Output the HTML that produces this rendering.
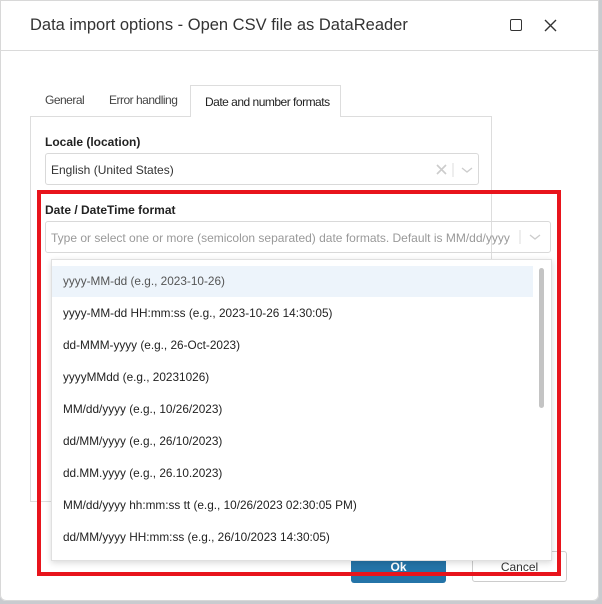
<!DOCTYPE html>
<html><head><style>
*{box-sizing:border-box;margin:0;padding:0}
body{width:602px;height:604px;background:#c9cbcf;font-family:"Liberation Sans",sans-serif;position:relative;overflow:hidden}
.dlg{position:absolute;left:0;top:0;width:599px;height:601px;background:#fff;border-radius:0 0 6px 6px;box-shadow:inset 0 0 0 1px #d8d8d8}
.a{position:absolute}
.title{left:30px;top:16px;font-size:16.5px;color:#333}
.sep{left:0;top:50px;width:599px;height:1px;background:#dadada}
.tab{font-size:12px;color:#444;letter-spacing:-0.5px}
.input{border:1px solid #d9d9d9;border-radius:3px;background:#fff}
.lbl{font-size:12px;color:#222;font-weight:bold}
.item{left:63px;font-size:11.8px;color:#222}
</style></head><body>
<div class="dlg">
<div class="a title">Data import options - Open CSV file as DataReader</div>
<div class="a" style="left:510px;top:19px;width:12px;height:12px;border:1.5px solid #333;border-radius:2px"></div>
<svg class="a" style="left:544px;top:19px" width="13" height="13"><path d="M1 1L12 12M12 1L1 12" stroke="#333" stroke-width="1.4"/></svg>
<div class="a sep"></div>
<div class="a" style="left:30px;top:116px;width:462px;height:386px;border:1px solid #ddd"></div>
<div class="a" style="left:190px;top:85px;width:151px;height:32px;border:1px solid #ddd;border-bottom:none;background:#fff"></div>
<div class="a tab" style="left:45px;top:93px">General</div>
<div class="a tab" style="left:109px;top:93px">Error handling</div>
<div class="a tab" style="left:205px;top:95px;color:#222">Date and number formats</div>
<div class="a lbl" style="left:45px;top:135px">Locale (location)</div>
<div class="a input" style="left:45px;top:153px;width:434px;height:32px"></div>
<div class="a" style="left:51px;top:163px;font-size:12px;color:#333">English (United States)</div>
<svg class="a" style="left:436px;top:163px" width="40" height="14"><path d="M1 2L10 11M10 2L1 11" stroke="#ccc" stroke-width="1.6"/><path d="M17 0V14" stroke="#ddd"/><path d="M26 5L31 9L36 5" stroke="#ccc" stroke-width="1.3" fill="none"/></svg>
<div class="a lbl" style="left:45px;top:203px">Date / DateTime format</div>
<div class="a" style="left:51px;top:231px;font-size:12px;color:#999;white-space:nowrap">Type or select one or more (semicolon separated) date formats. Default is MM/dd/yyyy</div>
<div class="a" style="left:45px;top:221px;width:506px;height:32px;border:1px solid #d9d9d9;border-radius:3px"></div>
<svg class="a" style="left:518px;top:230px" width="30" height="14"><path d="M2 0V14" stroke="#ddd"/><path d="M12 5L17 9L22 5" stroke="#ccc" stroke-width="1.3" fill="none"/></svg>
<div class="a" style="left:351px;top:551px;width:95px;height:32px;background:#2474a8;border-radius:3px;color:#fff;font-size:12px;font-weight:bold;text-align:center;line-height:32px">Ok</div>
<div class="a" style="left:472px;top:551px;width:95px;height:31px;border:1px solid #ccc;border-radius:3px;font-size:12px;color:#333;text-align:center;line-height:31px">Cancel</div>
<div class="a" style="left:51px;top:259px;width:501px;height:302px;background:#fff;border:1px solid #e0e0e0;box-shadow:0 2px 6px rgba(0,0,0,.15)"></div>
<div class="a" style="left:52px;top:266px;width:481px;height:31px;background:#edf4fb"></div>
<div class="a" style="left:539px;top:268px;width:5px;height:140px;background:#c4c4c4;border-radius:3px"></div>
<div class="a item" style="top:274px;color:#555">yyyy-MM-dd (e.g., 2023-10-26)</div>
<div class="a item" style="top:306px">yyyy-MM-dd HH:mm:ss (e.g., 2023-10-26 14:30:05)</div>
<div class="a item" style="top:338px">dd-MMM-yyyy (e.g., 26-Oct-2023)</div>
<div class="a item" style="top:370px">yyyyMMdd (e.g., 20231026)</div>
<div class="a item" style="top:402px">MM/dd/yyyy (e.g., 10/26/2023)</div>
<div class="a item" style="top:434px">dd/MM/yyyy (e.g., 26/10/2023)</div>
<div class="a item" style="top:466px">dd.MM.yyyy (e.g., 26.10.2023)</div>
<div class="a item" style="top:498px">MM/dd/yyyy hh:mm:ss tt (e.g., 10/26/2023 02:30:05 PM)</div>
<div class="a item" style="top:530px">dd/MM/yyyy HH:mm:ss (e.g., 26/10/2023 14:30:05)</div>
<div class="a" style="left:37px;top:190px;width:524px;height:386px;border:4px solid #e8141c"></div>
</div>
</body></html>
